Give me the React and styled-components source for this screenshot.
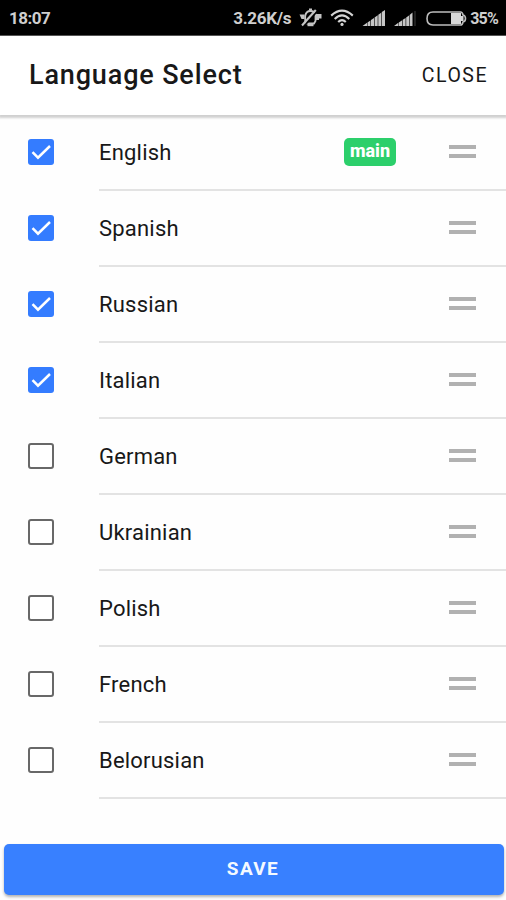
import React, { useState } from 'react';
import styled, { createGlobalStyle } from 'styled-components';

const initialLanguages = [
    { name: 'English', checked: true, main: true },
    { name: 'Spanish', checked: true },
    { name: 'Russian', checked: true },
    { name: 'Italian', checked: true },
    { name: 'German', checked: false },
    { name: 'Ukrainian', checked: false },
    { name: 'Polish', checked: false },
    { name: 'French', checked: false },
    { name: 'Belorusian', checked: false },
];

const MuteIcon = () => (
    <svg width='23' height='20' viewBox='0 0 23 20' fill='none' stroke='#c4c4c4'>
        <path d='M6.2 14.5V8Q7 3 11.5 3Q15.5 3 16.5 6V13L15 15.5H7Z' strokeWidth='1.8' />
        <path d='M0.5 6.5H5.5V11H2.5Z' fill='#c4c4c4' stroke='none' />
        <path d='M17 6H22.5V10.5H20V12H17Z' fill='#c4c4c4' stroke='none' />
        <path d='M8.5 17H14.5' strokeWidth='2.4' />
        <path d='M10 1.5H13' strokeWidth='2' />
        <path d='M5.2 17.8L18.7 2.7' stroke='#000' strokeWidth='1.8' />
        <path d='M3 17.5L16.8 2' strokeWidth='2.1' />
    </svg>
);

const WifiIcon = () => (
    <svg width='24' height='18' viewBox='0 0 24 18' fill='none' stroke='#d4d4d4' strokeWidth='2.1'>
        <path d='M1.2 6.6Q12 -3.2 22.8 6.6' />
        <path d='M4.7 9.9Q12 3 19.3 9.9' />
        <path d='M8.2 13Q12 9.2 15.8 13' />
        <circle cx='12' cy='15.4' r='1.6' fill='#d4d4d4' stroke='none' />
    </svg>
);

const SignalIcon = ({ weak }) => (
    <svg width='24' height='17' viewBox='0 0 24 17'>
        {weak ? (
            <>
                <path d='M0 16L4.3 12.8V16ZM4.8 12.5L8.2 10.2V16H4.8ZM8.8 9.8L11.6 7.9V16H8.8ZM12.2 7.5L15 5.5V16H12.2ZM15.6 5L18.5 2.5V16H15.6Z' fill='#c6c6c6' />
                <path d='M21 1V16' stroke='#282828' strokeWidth='1.6' />
            </>
        ) : (
            <path d='M0.5 16L5 12.8V16ZM5.5 12.5L8.4 10.5V16H5.5ZM9 10L12 8V16H9ZM12.6 7.5L15.7 5.3V16H12.6ZM16.3 4.8L19.2 2.8V16H16.3ZM19.8 2L23 0V16H19.8Z' fill='#c6c6c6' />
        )}
    </svg>
);

const BatteryIcon = () => (
    <svg width='41' height='15' viewBox='0 0 41 15'>
        <path d='M7 1H34.5Q36.5 1 37 4Q39.5 4.5 39.5 7.5Q39.5 10.5 37 11Q36.5 14 34.5 14H7Q1 14 1 7.5Q1 1 7 1Z' fill='none' stroke='#bdbdbd' strokeWidth='1.6' />
        <path d='M25 2H35V5H37.5V10H35V13H25Z' fill='#d8d8d8' />
    </svg>
);

const App = () => {
    const [languages, setLanguages] = useState(initialLanguages);

    const toggle = (name) => {
        setLanguages(
            languages.map((item) =>
                item.name === name ? { ...item, checked: !item.checked } : item
            )
        );
    };

    return (
        <Screen>
            <GlobalStyle />
            <StatusBar>
                <span>18:07</span>
                <StatusIcons>
                    <Speed>3.26K/s</Speed>
                    <MuteIcon />
                    <WifiIcon />
                    <SignalIcon />
                    <SignalIcon weak />
                    <BatteryIcon />
                    <Percent>35%</Percent>
                </StatusIcons>
            </StatusBar>
            <Header>
                <Title>Language Select</Title>
                <CloseButton>CLOSE</CloseButton>
            </Header>
            <List>
                {languages.map((item) => (
                    <Row key={item.name}>
                        <Checkbox
                            role='checkbox'
                            aria-checked={item.checked}
                            aria-label={item.name}
                            $checked={item.checked}
                            onClick={() => toggle(item.name)}
                        >
                            {item.checked && (
                                <svg width='26' height='26' viewBox='0 0 26 26'>
                                    <path d='M4.5 13.2L10 18.7L22 7' fill='none' stroke='#fff' strokeWidth='2.5' />
                                </svg>
                            )}
                        </Checkbox>
                        <RowBody>
                            <Name>{item.name}</Name>
                            {item.main && <Badge>main</Badge>}
                            <Handle />
                        </RowBody>
                    </Row>
                ))}
            </List>
            <Footer>
                <SaveButton>SAVE</SaveButton>
            </Footer>
        </Screen>
    );
};

export default App;

const GlobalStyle = createGlobalStyle`
    * {
        box-sizing: border-box;
    }

    body {
        margin: 0;
        background: #fff;
    }

    button {
        padding: 0;
        border: none;
        background: none;
        font-family: inherit;
        cursor: pointer;
    }
`;

const Screen = styled.div`
    display: flex;
    flex-direction: column;
    height: 900px;
    overflow: hidden;
    background: #fefefe;
    color: #181818;
    font-family: Roboto, sans-serif;
`;

const StatusBar = styled.div`
    display: flex;
    align-items: center;
    justify-content: space-between;
    flex: none;
    height: 36px;
    padding: 1px 8px 0 9px;
    border-bottom: 1px solid #555;
    background: #000;
    color: #cfcfcf;
    font-size: 17px;
    font-weight: 700;
    letter-spacing: -0.5px;
`;

const StatusIcons = styled.div`
    display: flex;
    align-items: center;
    gap: 8px;

    svg {
        flex: none;
    }
`;

const Speed = styled.span`
    letter-spacing: -0.3px;
`;

const Percent = styled.span`
    margin-left: -5px;
    font-size: 16px;
    letter-spacing: -0.8px;
`;

const Header = styled.header`
    display: flex;
    align-items: center;
    justify-content: space-between;
    flex: none;
    height: 79px;
    padding: 0 18px 1px 29px;
    background: #fff;
    box-shadow: 0 2px 2px 1px rgba(0, 0, 0, 0.18);
`;

const Title = styled.h1`
    margin: 0;
    font-size: 27px;
    font-weight: 500;
    letter-spacing: 0.85px;
`;

const CloseButton = styled.button`
    color: #181818;
    font-size: 19.5px;
    font-weight: 400;
    letter-spacing: 1.5px;
`;

const List = styled.div`
    flex: 1;
`;

const Row = styled.div`
    display: flex;
    height: 76px;
    padding-left: 28px;
`;

const Checkbox = styled.button`
    flex: none;
    width: 26px;
    height: 26px;
    margin: 24px 45px 0 0;
    border: ${(props) => (props.$checked ? 'none' : '2px solid #686868')};
    border-radius: 3px;
    background: ${(props) => (props.$checked ? '#347cff' : '#fff')};

    svg {
        display: block;
    }
`;

const RowBody = styled.div`
    display: flex;
    align-items: center;
    flex: 1;
    padding-right: 30px;
    border-bottom: 2px solid #e3e3e3;
`;

const Name = styled.span`
    flex: 1;
    font-size: 22px;
    letter-spacing: 0.2px;
`;

const Badge = styled.span`
    width: 52px;
    height: 28px;
    margin-right: 53px;
    border-radius: 5px;
    background: #2ccf6b;
    color: #fff;
    font-size: 18px;
    font-weight: 800;
    line-height: 25px;
    text-align: center;
`;

const Handle = styled.span`
    width: 27px;
    height: 13px;
    margin-bottom: 1px;
    border: solid #b1b1b1;
    border-width: 4px 0;
`;

const Footer = styled.footer`
    flex: none;
    height: 56px;
    padding: 0 2px 5px 4px;
`;

const SaveButton = styled.button`
    width: 100%;
    height: 51px;
    padding: 0 2px 2px 0;
    border-radius: 5px;
    background: #3880ff;
    box-shadow: 0 2px 3px rgba(0, 0, 0, 0.3);
    color: #f4f9ff;
    font-size: 19px;
    font-weight: 700;
    letter-spacing: 1.4px;
`;
